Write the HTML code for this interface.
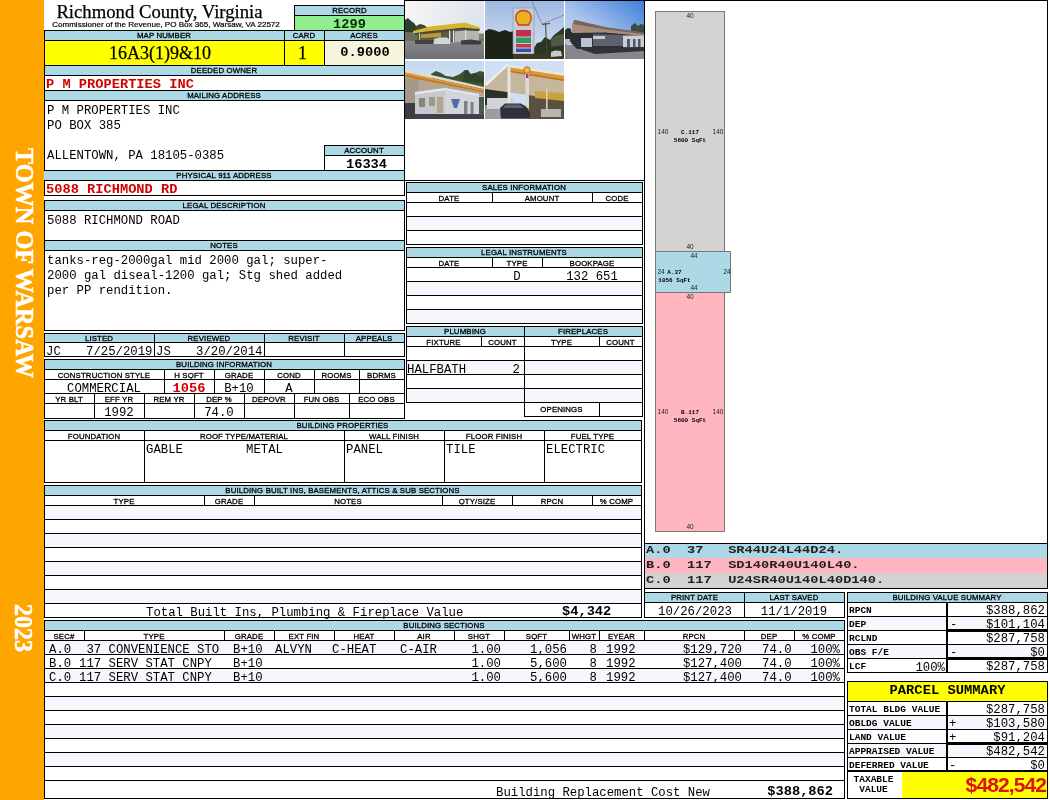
<!DOCTYPE html>
<html lang="en"><head><meta charset="utf-8"><title>Richmond County, Virginia - Property Record Card</title>
<style>
html,body{margin:0;padding:0;background:#fff;}
body{width:1050px;height:800px;position:relative;overflow:hidden;}
#p{position:absolute;left:0;top:0;width:1050px;height:800px;overflow:hidden;will-change:transform;}
#p div{position:absolute;box-sizing:border-box;}
.t{white-space:pre;line-height:1;color:#000;}
.lb{font-family:'Liberation Sans',sans-serif;font-size:7.8px;letter-spacing:0.15px;line-height:9px;height:9px;-webkit-text-stroke:0.3px #000;}
.m{font-family:'Liberation Mono',monospace;font-size:12.3px;line-height:14px;height:14px;}
.mb{font-family:'Liberation Mono',monospace;font-size:12.3px;line-height:14px;height:14px;font-weight:bold;}
.red{color:#d40000;}
.mB{font-family:'Liberation Mono',monospace;font-size:13.7px;line-height:14px;height:14px;font-weight:bold;transform:scaleY(.89);transform-origin:50% 76%;}
#p .lg{transform:scaleY(.85);}
.sk{font-family:'Liberation Sans',sans-serif;font-size:6.5px;line-height:8px;height:8px;color:#222;}
.skb{font-family:'Liberation Mono',monospace;font-size:6px;line-height:8px;height:8px;font-weight:bold;}
.sm{font-family:'Liberation Mono',monospace;font-size:9.5px;font-weight:bold;line-height:10px;}
</style></head>
<body><div id="p">
<div style="left:0px;top:0px;width:44px;height:800px;background:#ffa500;"></div>
<div class="t" style="left:23.5px;top:262.5px;width:0;height:0;"><div class="t" style="left:-150px;top:-15px;width:300px;height:30px;line-height:30px;text-align:center;transform:rotate(90deg) scaleX(0.97);font-family:'Liberation Serif',serif;font-weight:bold;font-size:25px;color:#fff;-webkit-text-stroke:0.5px #fff;">TOWN OF WARSAW</div></div>
<div class="t" style="left:23px;top:628px;width:0;height:0;"><div class="t" style="left:-50px;top:-15px;width:100px;height:30px;line-height:30px;text-align:center;transform:rotate(90deg) scaleX(0.96);font-family:'Liberation Serif',serif;font-weight:bold;font-size:25px;color:#fff;-webkit-text-stroke:0.5px #fff;">2023</div></div>
<div class="t " style="left:44px;top:2px;width:232px;text-align:center;left:43.5px;font-family:'Liberation Serif',serif;font-size:18.7px;-webkit-text-stroke:0.25px #000;line-height:20px;height:20px;">Richmond County, Virginia</div>
<div class="t " style="left:44px;top:20px;width:244px;text-align:center;font-family:'Liberation Sans',sans-serif;font-size:8.05px;-webkit-text-stroke:0.2px #000;line-height:10px;height:10px;">Commissioner of the Revenue, PO Box 365, Warsaw, VA 22572</div>
<div style="left:294px;top:5px;width:111px;height:26px;background:#90ee90;"></div>
<div style="left:294px;top:5px;width:111px;height:10px;background:#add8e6;"></div>
<div style="left:294px;top:5px;width:111px;height:1px;background:#000;"></div>
<div style="left:294px;top:30px;width:111px;height:1px;background:#000;"></div>
<div style="left:294px;top:5px;width:1px;height:26px;background:#000;"></div>
<div style="left:404px;top:5px;width:1px;height:26px;background:#000;"></div>
<div style="left:294px;top:15px;width:111px;height:1px;background:#000;"></div>
<div class="t lb" style="left:294px;top:6px;width:111px;text-align:center;">RECORD</div>
<div class="t mB" style="left:294px;top:18px;width:111px;text-align:center;color:#0a2a0a;">1299</div>
<div style="left:44px;top:30px;width:361px;height:11px;background:#add8e6;"></div>
<div style="left:44px;top:41px;width:281px;height:25px;background:#ffff00;"></div>
<div style="left:325px;top:41px;width:80px;height:25px;background:#f5f5dc;"></div>
<div style="left:44px;top:30px;width:361px;height:1px;background:#000;"></div>
<div style="left:44px;top:65px;width:361px;height:1px;background:#000;"></div>
<div style="left:44px;top:30px;width:1px;height:36px;background:#000;"></div>
<div style="left:404px;top:30px;width:1px;height:36px;background:#000;"></div>
<div style="left:44px;top:40px;width:361px;height:1px;background:#000;"></div>
<div style="left:284px;top:30px;width:1px;height:36px;background:#000;"></div>
<div style="left:324px;top:30px;width:1px;height:36px;background:#000;"></div>
<div class="t lb" style="left:44px;top:31px;width:240px;text-align:center;">MAP NUMBER</div>
<div class="t lb" style="left:284px;top:31px;width:40px;text-align:center;">CARD</div>
<div class="t lb" style="left:324px;top:31px;width:80px;text-align:center;">ACRES</div>
<div class="t " style="left:40px;top:42px;width:240px;text-align:center;font-family:'Liberation Serif',serif;font-size:18px;-webkit-text-stroke:0.25px #000;line-height:22px;height:22px;">16A3(1)9&amp;10</div>
<div class="t " style="left:283px;top:42px;width:39px;text-align:center;font-family:'Liberation Serif',serif;font-size:18px;-webkit-text-stroke:0.25px #000;line-height:22px;height:22px;">1</div>
<div class="t mB" style="left:325px;top:46px;width:80px;text-align:center;">0.9000</div>
<div style="left:44px;top:66px;width:361px;height:9px;background:#add8e6;"></div>
<div style="left:44px;top:75px;width:361px;height:1px;background:#000;"></div>
<div style="left:44px;top:90px;width:361px;height:1px;background:#000;"></div>
<div style="left:44px;top:91px;width:361px;height:9px;background:#add8e6;"></div>
<div style="left:44px;top:100px;width:361px;height:1px;background:#000;"></div>
<div style="left:44px;top:65px;width:1px;height:131px;background:#000;"></div>
<div style="left:404px;top:65px;width:1px;height:131px;background:#000;"></div>
<div class="t lb" style="left:44px;top:66px;width:360px;text-align:center;">DEEDED OWNER</div>
<div class="t lb" style="left:44px;top:91px;width:360px;text-align:center;">MAILING ADDRESS</div>
<div class="t mB red" style="left:46px;top:78px;width:350px;text-align:left;">P M PROPERTIES INC</div>
<div class="t m" style="left:47px;top:104px;width:400px;text-align:left;">P M PROPERTIES INC</div>
<div class="t m" style="left:47px;top:119px;width:400px;text-align:left;">PO BOX 385</div>
<div class="t m" style="left:47px;top:149px;width:400px;text-align:left;">ALLENTOWN, PA 18105-0385</div>
<div style="left:324px;top:145px;width:81px;height:10px;background:#add8e6;"></div>
<div style="left:324px;top:145px;width:81px;height:1px;background:#000;"></div>
<div style="left:324px;top:170px;width:81px;height:1px;background:#000;"></div>
<div style="left:324px;top:145px;width:1px;height:26px;background:#000;"></div>
<div style="left:404px;top:145px;width:1px;height:26px;background:#000;"></div>
<div style="left:324px;top:155px;width:81px;height:1px;background:#000;"></div>
<div class="t lb" style="left:324px;top:146px;width:80px;text-align:center;">ACCOUNT</div>
<div class="t mB" style="left:326px;top:158px;width:81px;text-align:center;">16334</div>
<div style="left:44px;top:170px;width:361px;height:10px;background:#add8e6;"></div>
<div style="left:44px;top:170px;width:361px;height:1px;background:#000;"></div>
<div style="left:44px;top:180px;width:361px;height:1px;background:#000;"></div>
<div style="left:44px;top:195px;width:361px;height:1px;background:#000;"></div>
<div class="t lb" style="left:44px;top:171px;width:360px;text-align:center;">PHYSICAL 911 ADDRESS</div>
<div class="t mB red" style="left:46px;top:183px;width:350px;text-align:left;">5088 RICHMOND RD</div>
<div style="left:44px;top:200px;width:361px;height:10px;background:#add8e6;"></div>
<div style="left:44px;top:240px;width:361px;height:10px;background:#add8e6;"></div>
<div style="left:44px;top:200px;width:361px;height:1px;background:#000;"></div>
<div style="left:44px;top:330px;width:361px;height:1px;background:#000;"></div>
<div style="left:44px;top:200px;width:1px;height:131px;background:#000;"></div>
<div style="left:404px;top:200px;width:1px;height:131px;background:#000;"></div>
<div style="left:44px;top:210px;width:361px;height:1px;background:#000;"></div>
<div style="left:44px;top:240px;width:361px;height:1px;background:#000;"></div>
<div style="left:44px;top:250px;width:361px;height:1px;background:#000;"></div>
<div class="t lb" style="left:44px;top:201px;width:360px;text-align:center;">LEGAL DESCRIPTION</div>
<div class="t lb" style="left:44px;top:241px;width:360px;text-align:center;">NOTES</div>
<div class="t m" style="left:47px;top:214px;width:400px;text-align:left;">5088 RICHMOND ROAD</div>
<div class="t m" style="left:47px;top:254px;width:400px;text-align:left;">tanks-reg-2000gal mid 2000 gal; super-</div>
<div class="t m" style="left:47px;top:269px;width:400px;text-align:left;">2000 gal diseal-1200 gal; Stg shed added</div>
<div class="t m" style="left:47px;top:284px;width:400px;text-align:left;">per PP rendition.</div>
<div style="left:44px;top:333px;width:361px;height:10px;background:#add8e6;"></div>
<div style="left:44px;top:333px;width:361px;height:1px;background:#000;"></div>
<div style="left:44px;top:356px;width:361px;height:1px;background:#000;"></div>
<div style="left:44px;top:333px;width:1px;height:24px;background:#000;"></div>
<div style="left:404px;top:333px;width:1px;height:24px;background:#000;"></div>
<div style="left:44px;top:342px;width:361px;height:1px;background:#000;"></div>
<div style="left:154px;top:333px;width:1px;height:24px;background:#000;"></div>
<div style="left:264px;top:333px;width:1px;height:24px;background:#000;"></div>
<div style="left:344px;top:333px;width:1px;height:24px;background:#000;"></div>
<div class="t lb" style="left:44px;top:334px;width:110px;text-align:center;">LISTED</div>
<div class="t lb" style="left:154px;top:334px;width:110px;text-align:center;">REVIEWED</div>
<div class="t lb" style="left:264px;top:334px;width:80px;text-align:center;">REVISIT</div>
<div class="t lb" style="left:344px;top:334px;width:60px;text-align:center;">APPEALS</div>
<div class="t m" style="left:46px;top:345px;width:400px;text-align:left;">JC</div>
<div class="t m" style="left:86px;top:345px;width:400px;text-align:left;">7/25/2019</div>
<div class="t m" style="left:156px;top:345px;width:400px;text-align:left;">JS</div>
<div class="t m" style="left:196px;top:345px;width:400px;text-align:left;">3/20/2014</div>
<div style="left:44px;top:359px;width:361px;height:10px;background:#add8e6;"></div>
<div style="left:44px;top:359px;width:361px;height:1px;background:#000;"></div>
<div style="left:44px;top:418px;width:361px;height:1px;background:#000;"></div>
<div style="left:44px;top:359px;width:1px;height:60px;background:#000;"></div>
<div style="left:404px;top:359px;width:1px;height:60px;background:#000;"></div>
<div style="left:44px;top:369px;width:361px;height:1px;background:#000;"></div>
<div style="left:44px;top:379px;width:361px;height:1px;background:#000;"></div>
<div style="left:44px;top:393px;width:361px;height:1px;background:#000;"></div>
<div style="left:44px;top:403px;width:361px;height:1px;background:#000;"></div>
<div class="t lb" style="left:44px;top:360px;width:360px;text-align:center;">BUILDING INFORMATION</div>
<div style="left:164px;top:369px;width:1px;height:25px;background:#000;"></div>
<div style="left:214px;top:369px;width:1px;height:25px;background:#000;"></div>
<div style="left:264px;top:369px;width:1px;height:25px;background:#000;"></div>
<div style="left:314px;top:369px;width:1px;height:25px;background:#000;"></div>
<div style="left:359px;top:369px;width:1px;height:25px;background:#000;"></div>
<div class="t lb" style="left:44px;top:370.5px;width:120px;text-align:center;">CONSTRUCTION STYLE</div>
<div class="t lb" style="left:164px;top:370.5px;width:50px;text-align:center;">H SQFT</div>
<div class="t lb" style="left:214px;top:370.5px;width:50px;text-align:center;">GRADE</div>
<div class="t lb" style="left:264px;top:370.5px;width:50px;text-align:center;">COND</div>
<div class="t lb" style="left:314px;top:370.5px;width:45px;text-align:center;">ROOMS</div>
<div class="t lb" style="left:359px;top:370.5px;width:45px;text-align:center;">BDRMS</div>
<div class="t m" style="left:44px;top:382px;width:120px;text-align:center;">COMMERCIAL</div>
<div class="t mB red" style="left:164px;top:382px;width:50px;text-align:center;">1056</div>
<div class="t m" style="left:214px;top:382px;width:50px;text-align:center;">B+10</div>
<div class="t m" style="left:264px;top:382px;width:50px;text-align:center;">A</div>
<div style="left:94px;top:393px;width:1px;height:26px;background:#000;"></div>
<div style="left:144px;top:393px;width:1px;height:26px;background:#000;"></div>
<div style="left:194px;top:393px;width:1px;height:26px;background:#000;"></div>
<div style="left:244px;top:393px;width:1px;height:26px;background:#000;"></div>
<div style="left:294px;top:393px;width:1px;height:26px;background:#000;"></div>
<div style="left:349px;top:393px;width:1px;height:26px;background:#000;"></div>
<div class="t lb" style="left:44px;top:394.5px;width:50px;text-align:center;">YR BLT</div>
<div class="t lb" style="left:94px;top:394.5px;width:50px;text-align:center;">EFF YR</div>
<div class="t lb" style="left:144px;top:394.5px;width:50px;text-align:center;">REM YR</div>
<div class="t lb" style="left:194px;top:394.5px;width:50px;text-align:center;">DEP %</div>
<div class="t lb" style="left:244px;top:394.5px;width:50px;text-align:center;">DEPOVR</div>
<div class="t lb" style="left:294px;top:394.5px;width:55px;text-align:center;">FUN OBS</div>
<div class="t lb" style="left:349px;top:394.5px;width:55px;text-align:center;">ECO OBS</div>
<div class="t m" style="left:94px;top:406px;width:50px;text-align:center;">1992</div>
<div class="t m" style="left:194px;top:406px;width:50px;text-align:center;">74.0</div>
<div style="left:44px;top:420px;width:598px;height:10px;background:#add8e6;"></div>
<div style="left:44px;top:420px;width:598px;height:1px;background:#000;"></div>
<div style="left:44px;top:482px;width:598px;height:1px;background:#000;"></div>
<div style="left:44px;top:420px;width:1px;height:63px;background:#000;"></div>
<div style="left:641px;top:420px;width:1px;height:63px;background:#000;"></div>
<div style="left:44px;top:430px;width:598px;height:1px;background:#000;"></div>
<div style="left:44px;top:440px;width:598px;height:1px;background:#000;"></div>
<div class="t lb" style="left:44px;top:421px;width:597px;text-align:center;">BUILDING PROPERTIES</div>
<div style="left:144px;top:430px;width:1px;height:53px;background:#000;"></div>
<div style="left:344px;top:430px;width:1px;height:53px;background:#000;"></div>
<div style="left:444px;top:430px;width:1px;height:53px;background:#000;"></div>
<div style="left:544px;top:430px;width:1px;height:53px;background:#000;"></div>
<div class="t lb" style="left:44px;top:431.5px;width:100px;text-align:center;">FOUNDATION</div>
<div class="t lb" style="left:144px;top:431.5px;width:200px;text-align:center;">ROOF TYPE/MATERIAL</div>
<div class="t lb" style="left:344px;top:431.5px;width:100px;text-align:center;">WALL FINISH</div>
<div class="t lb" style="left:444px;top:431.5px;width:100px;text-align:center;">FLOOR FINISH</div>
<div class="t lb" style="left:544px;top:431.5px;width:97px;text-align:center;">FUEL TYPE</div>
<div class="t m" style="left:146px;top:443px;width:400px;text-align:left;">GABLE</div>
<div class="t m" style="left:246px;top:443px;width:400px;text-align:left;">METAL</div>
<div class="t m" style="left:346px;top:443px;width:400px;text-align:left;">PANEL</div>
<div class="t m" style="left:446px;top:443px;width:400px;text-align:left;">TILE</div>
<div class="t m" style="left:546px;top:443px;width:400px;text-align:left;">ELECTRIC</div>
<div style="left:44px;top:485px;width:598px;height:10px;background:#add8e6;"></div>
<div style="left:44px;top:505px;width:598px;height:14px;background:#f6f6fd;"></div>
<div style="left:44px;top:533px;width:598px;height:14px;background:#f6f6fd;"></div>
<div style="left:44px;top:561px;width:598px;height:14px;background:#f6f6fd;"></div>
<div style="left:44px;top:589px;width:598px;height:14px;background:#f6f6fd;"></div>
<div style="left:44px;top:485px;width:598px;height:1px;background:#000;"></div>
<div style="left:44px;top:617px;width:598px;height:1px;background:#000;"></div>
<div style="left:44px;top:485px;width:1px;height:133px;background:#000;"></div>
<div style="left:641px;top:485px;width:1px;height:133px;background:#000;"></div>
<div style="left:44px;top:495px;width:598px;height:1px;background:#000;"></div>
<div style="left:44px;top:505px;width:598px;height:1px;background:#000;"></div>
<div style="left:44px;top:519px;width:598px;height:1px;background:#000;"></div>
<div style="left:44px;top:533px;width:598px;height:1px;background:#000;"></div>
<div style="left:44px;top:547px;width:598px;height:1px;background:#000;"></div>
<div style="left:44px;top:561px;width:598px;height:1px;background:#000;"></div>
<div style="left:44px;top:575px;width:598px;height:1px;background:#000;"></div>
<div style="left:44px;top:589px;width:598px;height:1px;background:#000;"></div>
<div style="left:44px;top:603px;width:598px;height:1px;background:#000;"></div>
<div class="t lb" style="left:44px;top:486px;width:597px;text-align:center;">BUILDING BUILT INS, BASEMENTS, ATTICS &amp; SUB SECTIONS</div>
<div style="left:204px;top:495px;width:1px;height:11px;background:#000;"></div>
<div style="left:254px;top:495px;width:1px;height:11px;background:#000;"></div>
<div style="left:442px;top:495px;width:1px;height:11px;background:#000;"></div>
<div style="left:512px;top:495px;width:1px;height:11px;background:#000;"></div>
<div style="left:592px;top:495px;width:1px;height:11px;background:#000;"></div>
<div class="t lb" style="left:44px;top:496.5px;width:160px;text-align:center;">TYPE</div>
<div class="t lb" style="left:204px;top:496.5px;width:50px;text-align:center;">GRADE</div>
<div class="t lb" style="left:254px;top:496.5px;width:188px;text-align:center;">NOTES</div>
<div class="t lb" style="left:442px;top:496.5px;width:70px;text-align:center;">QTY/SIZE</div>
<div class="t lb" style="left:512px;top:496.5px;width:80px;text-align:center;">RPCN</div>
<div class="t lb" style="left:592px;top:496.5px;width:49px;text-align:center;">% COMP</div>
<div class="t m" style="left:146px;top:606px;width:400px;text-align:left;">Total Built Ins, Plumbing &amp; Fireplace Value</div>
<div class="t mB" style="left:562px;top:605px;width:100px;text-align:left;">$4,342</div>
<div style="left:44px;top:620px;width:801px;height:10px;background:#add8e6;"></div>
<div style="left:44px;top:640px;width:801px;height:14px;background:#f6f6fd;"></div>
<div style="left:44px;top:668px;width:801px;height:14px;background:#f6f6fd;"></div>
<div style="left:44px;top:696px;width:801px;height:14px;background:#f6f6fd;"></div>
<div style="left:44px;top:724px;width:801px;height:14px;background:#f6f6fd;"></div>
<div style="left:44px;top:752px;width:801px;height:14px;background:#f6f6fd;"></div>
<div style="left:44px;top:620px;width:801px;height:1px;background:#000;"></div>
<div style="left:44px;top:798px;width:801px;height:1px;background:#000;"></div>
<div style="left:44px;top:620px;width:1px;height:179px;background:#000;"></div>
<div style="left:844px;top:620px;width:1px;height:179px;background:#000;"></div>
<div style="left:44px;top:630px;width:801px;height:1px;background:#000;"></div>
<div style="left:44px;top:640px;width:801px;height:1px;background:#000;"></div>
<div style="left:44px;top:654px;width:801px;height:1px;background:#000;"></div>
<div style="left:44px;top:668px;width:801px;height:1px;background:#000;"></div>
<div style="left:44px;top:682px;width:801px;height:1px;background:#000;"></div>
<div style="left:44px;top:696px;width:801px;height:1px;background:#000;"></div>
<div style="left:44px;top:710px;width:801px;height:1px;background:#000;"></div>
<div style="left:44px;top:724px;width:801px;height:1px;background:#000;"></div>
<div style="left:44px;top:738px;width:801px;height:1px;background:#000;"></div>
<div style="left:44px;top:752px;width:801px;height:1px;background:#000;"></div>
<div style="left:44px;top:766px;width:801px;height:1px;background:#000;"></div>
<div style="left:44px;top:780px;width:801px;height:1px;background:#000;"></div>
<div class="t lb" style="left:44px;top:621px;width:800px;text-align:center;">BUILDING SECTIONS</div>
<div style="left:84px;top:630px;width:1px;height:11px;background:#000;"></div>
<div style="left:224px;top:630px;width:1px;height:11px;background:#000;"></div>
<div style="left:274px;top:630px;width:1px;height:11px;background:#000;"></div>
<div style="left:334px;top:630px;width:1px;height:11px;background:#000;"></div>
<div style="left:394px;top:630px;width:1px;height:11px;background:#000;"></div>
<div style="left:454px;top:630px;width:1px;height:11px;background:#000;"></div>
<div style="left:504px;top:630px;width:1px;height:11px;background:#000;"></div>
<div style="left:569px;top:630px;width:1px;height:11px;background:#000;"></div>
<div style="left:599px;top:630px;width:1px;height:11px;background:#000;"></div>
<div style="left:644px;top:630px;width:1px;height:11px;background:#000;"></div>
<div style="left:744px;top:630px;width:1px;height:11px;background:#000;"></div>
<div style="left:794px;top:630px;width:1px;height:11px;background:#000;"></div>
<div class="t lb" style="left:44px;top:631.5px;width:40px;text-align:center;">SEC#</div>
<div class="t lb" style="left:84px;top:631.5px;width:140px;text-align:center;">TYPE</div>
<div class="t lb" style="left:224px;top:631.5px;width:50px;text-align:center;">GRADE</div>
<div class="t lb" style="left:274px;top:631.5px;width:60px;text-align:center;">EXT FIN</div>
<div class="t lb" style="left:334px;top:631.5px;width:60px;text-align:center;">HEAT</div>
<div class="t lb" style="left:394px;top:631.5px;width:60px;text-align:center;">AIR</div>
<div class="t lb" style="left:454px;top:631.5px;width:50px;text-align:center;">SHGT</div>
<div class="t lb" style="left:504px;top:631.5px;width:65px;text-align:center;">SQFT</div>
<div class="t lb" style="left:569px;top:631.5px;width:30px;text-align:center;">WHGT</div>
<div class="t lb" style="left:599px;top:631.5px;width:45px;text-align:center;">EYEAR</div>
<div class="t lb" style="left:644px;top:631.5px;width:100px;text-align:center;">RPCN</div>
<div class="t lb" style="left:744px;top:631.5px;width:50px;text-align:center;">DEP</div>
<div class="t lb" style="left:794px;top:631.5px;width:50px;text-align:center;">% COMP</div>
<div class="t m" style="left:49px;top:643px;width:400px;text-align:left;">A.0</div>
<div class="t m" style="left:79px;top:643px;width:400px;text-align:left;"> 37 CONVENIENCE STO</div>
<div class="t m" style="left:233px;top:643px;width:400px;text-align:left;">B+10</div>
<div class="t m" style="left:275px;top:643px;width:400px;text-align:left;">ALVYN</div>
<div class="t m" style="left:332px;top:643px;width:400px;text-align:left;">C-HEAT</div>
<div class="t m" style="left:400px;top:643px;width:400px;text-align:left;">C-AIR</div>
<div class="t m" style="left:401px;top:643px;width:100px;text-align:right;">1.00</div>
<div class="t m" style="left:467px;top:643px;width:100px;text-align:right;">1,056</div>
<div class="t m" style="left:497px;top:643px;width:100px;text-align:right;">8</div>
<div class="t m" style="left:606px;top:643px;width:400px;text-align:left;">1992</div>
<div class="t m" style="left:642px;top:643px;width:100px;text-align:right;">$129,720</div>
<div class="t m" style="left:762px;top:643px;width:400px;text-align:left;">74.0</div>
<div class="t m" style="left:740px;top:643px;width:100px;text-align:right;">100%</div>
<div class="t m" style="left:49px;top:657px;width:400px;text-align:left;">B.0</div>
<div class="t m" style="left:79px;top:657px;width:400px;text-align:left;">117 SERV STAT CNPY</div>
<div class="t m" style="left:233px;top:657px;width:400px;text-align:left;">B+10</div>
<div class="t m" style="left:275px;top:657px;width:400px;text-align:left;"></div>
<div class="t m" style="left:332px;top:657px;width:400px;text-align:left;"></div>
<div class="t m" style="left:400px;top:657px;width:400px;text-align:left;"></div>
<div class="t m" style="left:401px;top:657px;width:100px;text-align:right;">1.00</div>
<div class="t m" style="left:467px;top:657px;width:100px;text-align:right;">5,600</div>
<div class="t m" style="left:497px;top:657px;width:100px;text-align:right;">8</div>
<div class="t m" style="left:606px;top:657px;width:400px;text-align:left;">1992</div>
<div class="t m" style="left:642px;top:657px;width:100px;text-align:right;">$127,400</div>
<div class="t m" style="left:762px;top:657px;width:400px;text-align:left;">74.0</div>
<div class="t m" style="left:740px;top:657px;width:100px;text-align:right;">100%</div>
<div class="t m" style="left:49px;top:671px;width:400px;text-align:left;">C.0</div>
<div class="t m" style="left:79px;top:671px;width:400px;text-align:left;">117 SERV STAT CNPY</div>
<div class="t m" style="left:233px;top:671px;width:400px;text-align:left;">B+10</div>
<div class="t m" style="left:275px;top:671px;width:400px;text-align:left;"></div>
<div class="t m" style="left:332px;top:671px;width:400px;text-align:left;"></div>
<div class="t m" style="left:400px;top:671px;width:400px;text-align:left;"></div>
<div class="t m" style="left:401px;top:671px;width:100px;text-align:right;">1.00</div>
<div class="t m" style="left:467px;top:671px;width:100px;text-align:right;">5,600</div>
<div class="t m" style="left:497px;top:671px;width:100px;text-align:right;">8</div>
<div class="t m" style="left:606px;top:671px;width:400px;text-align:left;">1992</div>
<div class="t m" style="left:642px;top:671px;width:100px;text-align:right;">$127,400</div>
<div class="t m" style="left:762px;top:671px;width:400px;text-align:left;">74.0</div>
<div class="t m" style="left:740px;top:671px;width:100px;text-align:right;">100%</div>
<div class="t m" style="left:496px;top:786px;width:400px;text-align:left;">Building Replacement Cost New</div>
<div class="t mB" style="left:733px;top:785px;width:100px;text-align:right;">$388,862</div>
<div style="left:404px;top:0px;width:241px;height:1px;background:#000;"></div>
<div style="left:404px;top:180px;width:241px;height:1px;background:#000;"></div>
<div style="left:404px;top:0px;width:1px;height:181px;background:#000;"></div>
<div style="left:644px;top:0px;width:1px;height:181px;background:#000;"></div>
<svg style="position:absolute;left:405px;top:1px;filter:blur(0.4px);" width="79" height="58" viewBox="0 0 79 58"><defs><linearGradient id="s1" x1="0" y1="0" x2="1" y2="0.3"><stop offset="0" stop-color="#f6f6f4"/><stop offset="1" stop-color="#dde4ee"/></linearGradient><linearGradient id="g1" x1="0" y1="0" x2="0" y2="1"><stop offset="0" stop-color="#84868a"/><stop offset="1" stop-color="#6e7076"/></linearGradient></defs><rect x="0" y="0" width="79" height="58" fill="url(#s1)" /><polygon points="0,19 3,17 6,20 9,22 11,25 11,36 0,36" fill="#2f3d2c" /><polygon points="11,25 15,23 19,24 23,27 26,30 11,34" fill="#3d4a36" /><polygon points="0,31 79,33 79,40 0,40" fill="#6a6e62" /><polygon points="62,33 79,32.5 79,38 62,38" fill="#80826f" /><rect x="0" y="40" width="79" height="18" fill="url(#g1)" /><polygon points="12,31 50,28 50,41 12,41" fill="#5d5a4c" /><polygon points="50,28 74,29 74,40 50,41" fill="#b4b6b4" /><polygon points="16,31 36,29 36,36 16,37" fill="#b89a38" /><polygon points="8,30 25,25.5 60,21.5 75,26.5 75,28 58,26.5 25,30 8,32.5" fill="#d6b62a" /><polygon points="9,32.5 25,30 58,26.5 75,28 74,30 58,29.5 25,32.5 10,34" fill="#4c4a34" /><rect x="44" y="29.5" width="1.3" height="12" fill="#e8e8e8" /><rect x="48" y="29.5" width="1.3" height="12" fill="#e8e8e8" /><rect x="60" y="29" width="1.2" height="11" fill="#dcdcdc" /><rect x="14" y="32" width="1" height="9" fill="#c8c8c0" /><polygon points="29,38 34,36.5 42,36.5 45,39 45,43 29,43" fill="#d4d6da" /><polygon points="10,39 28,39 28,43 10,43" fill="#40423e" /><polygon points="56,39.5 66,38.5 76,40 76,43.5 56,43.5" fill="#3a3c40" /></svg>
<svg style="position:absolute;left:485px;top:1px;filter:blur(0.4px);" width="79" height="58" viewBox="0 0 79 58"><defs><linearGradient id="s2" x1="0" y1="0" x2="0" y2="1"><stop offset="0" stop-color="#9fb9e2"/><stop offset="0.75" stop-color="#cddaf0"/><stop offset="1" stop-color="#d8e2f2"/></linearGradient></defs><rect x="0" y="0" width="79" height="58" fill="url(#s2)" /><polygon points="0,30 4,28 9,29 14,31 20,29 25,31 29,30 29,58 0,58" fill="#1b2417" /><polygon points="49,47 52,42 56,41 60,36 65,39 69,34 73,31 79,26 79,58 49,58" fill="#2c3626" /><polygon points="66,38 72,34 79,33 79,44 66,46" fill="#4a5a44" /><path d="M47,0 L57,23 M57,23 L79,14" stroke="#56606e" stroke-width="0.5" fill="none"/><path d="M60.5,22 L62,55 M57,23.5 L65,22.5" stroke="#4a4238" stroke-width="1" fill="none"/><rect x="28" y="7" width="21" height="46" fill="#c6cbd8" stroke="#8a90a0" stroke-width="0.6"/><path d="M31,19 C30,12 34,9.5 38.5,9.5 C43,9.5 47,12 46,19 L43.5,24 L33.5,24 Z" fill="#e9b024" stroke="#c63a22" stroke-width="1.3"/><rect x="31" y="29" width="15" height="6.5" fill="#c0304a" /><rect x="31" y="36.5" width="15" height="5.5" fill="#2f9a62" /><rect x="31" y="43" width="15" height="3.5" fill="#c43a4a" /><rect x="31" y="47.5" width="15" height="3.5" fill="#3452a0" /><rect x="28" y="53" width="51" height="5" fill="#3e3a22" /><polygon points="66,51 70,49.5 76,50 77,55 66,56" fill="#c9c9cb" /></svg>
<svg style="position:absolute;left:565px;top:1px;filter:blur(0.4px);" width="79" height="58" viewBox="0 0 79 58"><defs><linearGradient id="s3" x1="0" y1="1" x2="1" y2="0"><stop offset="0" stop-color="#d2def2"/><stop offset="0.45" stop-color="#a9c4ec"/><stop offset="1" stop-color="#3f7fda"/></linearGradient></defs><rect x="0" y="0" width="79" height="58" fill="url(#s3)" /><polygon points="0,29 3,27 6,28 7,40 0,44" fill="#27302a" /><polygon points="66,25 70,22 73,25 76,23 79,24 79,32 66,30" fill="#3a4a44" /><rect x="0" y="44" width="79" height="14" fill="#85878b" /><polygon points="6,31 40,31 79,34.5 79,48 12,48 6,42" fill="#2b2f35" /><polygon points="7,22 40,28.5 79,33 79,35 40,31.5 7,32" fill="#a88c7c" /><polygon points="8.5,19.5 10.5,19 40,26 79,31.5 79,33.2 40,28.5 8.5,23" fill="#78645a" /><polygon points="28,33 58,34 58,45 28,45" fill="#5e626c" /><rect x="58" y="34.5" width="21" height="12" fill="#c9ced6" /><rect x="62" y="38" width="3" height="8" fill="#50586a" /><rect x="68" y="38" width="2.5" height="8" fill="#50586a" /><rect x="73" y="38" width="2.5" height="8" fill="#50586a" /><polygon points="16,37 27,37 27,46 16,46" fill="#bcc2d2" /><rect x="0" y="38" width="5" height="5" fill="#b8bcc0" /><rect x="28" y="35" width="12" height="3" fill="#c8c8cc" /><polygon points="12,47 79,46 79,50 30,53" fill="#2f3338" /></svg>
<svg style="position:absolute;left:405px;top:61px;filter:blur(0.4px);" width="79" height="58" viewBox="0 0 79 58"><defs><linearGradient id="s4" x1="0" y1="0" x2="0" y2="1"><stop offset="0" stop-color="#c2d7f0"/><stop offset="0.5" stop-color="#dfe9f5"/></linearGradient></defs><rect x="0" y="0" width="79" height="58" fill="url(#s4)" /><polygon points="26,13 31,10 36,12 41,15 48,16 55,13 60,9 64,13 70,12 75,10 79,11 79,32 26,24" fill="#3c5232" /><polygon points="60,9 63,9 66,14 70,12 74,16 79,13 79,22 58,20" fill="#2f4428" /><polygon points="0,15 79,31 79,36 40,30 0,36" fill="#b3a692" /><rect x="0" y="18" width="14" height="30" fill="#a3988a" /><polygon points="0,8 79,26 79,28.3 0,11.3" fill="#dcdcd4" /><polygon points="0,11.3 79,28.3 79,31.5 0,15.5" fill="#da9a36" /><polygon points="0,13.5 79,30.3 79,31.5 0,15.5" fill="#c87428" /><polygon points="10,31 40,27 74,33 74,54 10,55" fill="#c5c9cd" /><polygon points="10,31 40,27 74,33 74,35 40,29.5 10,33.5" fill="#e4e6e8" /><polygon points="40,29.5 74,35 74,54 40,54" fill="#d2d6da" /><rect x="14" y="37" width="6" height="9" fill="#8a8478" /><rect x="24" y="36" width="6" height="9" fill="#a09a84" /><rect x="32" y="36" width="6" height="16" fill="#b0a890" /><polygon points="46,38 55,38 52,47 49,47" fill="#4f6eb2" /><rect x="59" y="40" width="3.5" height="13" fill="#7a828a" /><rect x="65.5" y="41" width="3" height="12" fill="#7a828a" /><rect x="0" y="53" width="79" height="5" fill="#3e4246" /><rect x="0" y="42" width="10" height="16" fill="#3a3e42" /><rect x="74" y="36" width="5" height="18" fill="#4a5a48" /></svg>
<svg style="position:absolute;left:485px;top:61px;filter:blur(0.4px);" width="79" height="58" viewBox="0 0 79 58"><defs></defs><rect x="0" y="0" width="79" height="58" fill="#cfdff4" /><polygon points="0,27 24,30 24,44 0,44" fill="#2b3129" /><rect x="0" y="44" width="79" height="14" fill="#8f9397" /><polygon points="44,33 79,35 79,58 44,58" fill="#5a5140" /><polygon points="0,24 22,4 79,13 79,37 50,35 0,28" fill="#c6b69e" /><polygon points="50,30 79,32 79,40 50,37" fill="#c9a240" /><polygon points="0,23 22,3 24.5,3.6 1.5,25" fill="#eeeeea" /><polygon points="24.5,3.6 79,12 79,15 24.5,6.5" fill="#e8e6de" /><polygon points="24.5,6.5 79,15 79,20 24.5,11" fill="#d99a34" /><polygon points="24.5,9.5 79,18.5 79,20 24.5,11" fill="#c66e28" /><rect x="2" y="37" width="27" height="11" fill="#d2d3d7" /><rect x="22.5" y="4" width="3" height="42" fill="#e6e4de" /><rect x="40.5" y="7" width="3.5" height="40" fill="#dcdad4" /><rect x="61" y="26" width="1.6" height="22" fill="#d8d0b0" /><circle cx="42" cy="9" r="3.2" fill="#e8c03a" stroke="#c8482a" stroke-width="0.8"/><rect x="41" y="13" width="2.5" height="4" fill="#a03a6a" /><polygon points="15,47 20,42.5 36,42.5 42,46.5 45,52 45,57.5 16,57.5" fill="#2f3138" /><polygon points="21,43.5 35,43.5 39,47 18,47" fill="#5a6270" /><rect x="56" y="48" width="20" height="8" fill="#b8b4b0" /><rect x="0" y="48" width="15" height="10" fill="#9a9ea2" /></svg>
<div style="left:406px;top:182px;width:237px;height:10px;background:#add8e6;"></div>
<div style="left:406px;top:216px;width:237px;height:14px;background:#f6f6fd;"></div>
<div style="left:406px;top:182px;width:237px;height:1px;background:#000;"></div>
<div style="left:406px;top:244px;width:237px;height:1px;background:#000;"></div>
<div style="left:406px;top:182px;width:1px;height:63px;background:#000;"></div>
<div style="left:642px;top:182px;width:1px;height:63px;background:#000;"></div>
<div style="left:406px;top:192px;width:237px;height:1px;background:#000;"></div>
<div style="left:406px;top:202px;width:237px;height:1px;background:#000;"></div>
<div style="left:406px;top:202px;width:237px;height:1px;background:#000;"></div>
<div style="left:406px;top:216px;width:237px;height:1px;background:#000;"></div>
<div style="left:406px;top:230px;width:237px;height:1px;background:#000;"></div>
<div class="t lb" style="left:406px;top:183px;width:236px;text-align:center;">SALES INFORMATION</div>
<div style="left:492px;top:192px;width:1px;height:11px;background:#000;"></div>
<div style="left:592px;top:192px;width:1px;height:11px;background:#000;"></div>
<div class="t lb" style="left:406px;top:193.5px;width:86px;text-align:center;">DATE</div>
<div class="t lb" style="left:492px;top:193.5px;width:100px;text-align:center;">AMOUNT</div>
<div class="t lb" style="left:592px;top:193.5px;width:50px;text-align:center;">CODE</div>
<div style="left:406px;top:247px;width:237px;height:10px;background:#add8e6;"></div>
<div style="left:406px;top:281px;width:237px;height:14px;background:#f6f6fd;"></div>
<div style="left:406px;top:309px;width:237px;height:14px;background:#f6f6fd;"></div>
<div style="left:406px;top:247px;width:237px;height:1px;background:#000;"></div>
<div style="left:406px;top:323px;width:237px;height:1px;background:#000;"></div>
<div style="left:406px;top:247px;width:1px;height:77px;background:#000;"></div>
<div style="left:642px;top:247px;width:1px;height:77px;background:#000;"></div>
<div style="left:406px;top:257px;width:237px;height:1px;background:#000;"></div>
<div style="left:406px;top:267px;width:237px;height:1px;background:#000;"></div>
<div style="left:406px;top:267px;width:237px;height:1px;background:#000;"></div>
<div style="left:406px;top:281px;width:237px;height:1px;background:#000;"></div>
<div style="left:406px;top:295px;width:237px;height:1px;background:#000;"></div>
<div style="left:406px;top:309px;width:237px;height:1px;background:#000;"></div>
<div class="t lb" style="left:406px;top:248px;width:236px;text-align:center;">LEGAL INSTRUMENTS</div>
<div style="left:492px;top:257px;width:1px;height:11px;background:#000;"></div>
<div style="left:542px;top:257px;width:1px;height:11px;background:#000;"></div>
<div class="t lb" style="left:406px;top:258.5px;width:86px;text-align:center;">DATE</div>
<div class="t lb" style="left:492px;top:258.5px;width:50px;text-align:center;">TYPE</div>
<div class="t lb" style="left:542px;top:258.5px;width:100px;text-align:center;">BOOKPAGE</div>
<div class="t m" style="left:492px;top:270px;width:50px;text-align:center;">D</div>
<div class="t m" style="left:542px;top:270px;width:100px;text-align:center;">132 651</div>
<div style="left:406px;top:326px;width:119px;height:10px;background:#add8e6;"></div>
<div style="left:406px;top:360px;width:119px;height:14px;background:#f6f6fd;"></div>
<div style="left:406px;top:388px;width:119px;height:14px;background:#f6f6fd;"></div>
<div style="left:406px;top:326px;width:119px;height:1px;background:#000;"></div>
<div style="left:406px;top:402px;width:119px;height:1px;background:#000;"></div>
<div style="left:406px;top:326px;width:1px;height:77px;background:#000;"></div>
<div style="left:524px;top:326px;width:1px;height:77px;background:#000;"></div>
<div style="left:406px;top:336px;width:119px;height:1px;background:#000;"></div>
<div style="left:406px;top:346px;width:119px;height:1px;background:#000;"></div>
<div style="left:406px;top:346px;width:119px;height:1px;background:#000;"></div>
<div style="left:406px;top:360px;width:119px;height:1px;background:#000;"></div>
<div style="left:406px;top:374px;width:119px;height:1px;background:#000;"></div>
<div style="left:406px;top:388px;width:119px;height:1px;background:#000;"></div>
<div class="t lb" style="left:406px;top:327px;width:118px;text-align:center;">PLUMBING</div>
<div style="left:481px;top:336px;width:1px;height:11px;background:#000;"></div>
<div class="t lb" style="left:406px;top:337.5px;width:75px;text-align:center;">FIXTURE</div>
<div class="t lb" style="left:481px;top:337.5px;width:43px;text-align:center;">COUNT</div>
<div style="left:524px;top:326px;width:119px;height:10px;background:#add8e6;"></div>
<div style="left:524px;top:360px;width:119px;height:14px;background:#f6f6fd;"></div>
<div style="left:524px;top:388px;width:119px;height:14px;background:#f6f6fd;"></div>
<div style="left:524px;top:326px;width:119px;height:1px;background:#000;"></div>
<div style="left:524px;top:402px;width:119px;height:1px;background:#000;"></div>
<div style="left:524px;top:326px;width:1px;height:77px;background:#000;"></div>
<div style="left:642px;top:326px;width:1px;height:77px;background:#000;"></div>
<div style="left:524px;top:336px;width:119px;height:1px;background:#000;"></div>
<div style="left:524px;top:346px;width:119px;height:1px;background:#000;"></div>
<div style="left:524px;top:346px;width:119px;height:1px;background:#000;"></div>
<div style="left:524px;top:360px;width:119px;height:1px;background:#000;"></div>
<div style="left:524px;top:374px;width:119px;height:1px;background:#000;"></div>
<div style="left:524px;top:388px;width:119px;height:1px;background:#000;"></div>
<div class="t lb" style="left:524px;top:327px;width:118px;text-align:center;">FIREPLACES</div>
<div style="left:599px;top:336px;width:1px;height:11px;background:#000;"></div>
<div class="t lb" style="left:524px;top:337.5px;width:75px;text-align:center;">TYPE</div>
<div class="t lb" style="left:599px;top:337.5px;width:43px;text-align:center;">COUNT</div>
<div style="left:524px;top:402px;width:119px;height:1px;background:#000;"></div>
<div style="left:524px;top:416px;width:119px;height:1px;background:#000;"></div>
<div style="left:524px;top:402px;width:1px;height:15px;background:#000;"></div>
<div style="left:642px;top:402px;width:1px;height:15px;background:#000;"></div>
<div style="left:599px;top:402px;width:1px;height:15px;background:#000;"></div>
<div class="t lb" style="left:524px;top:405px;width:75px;text-align:center;">OPENINGS</div>
<div class="t m" style="left:407px;top:363px;width:400px;text-align:left;">HALFBATH</div>
<div class="t m" style="left:420px;top:363px;width:100px;text-align:right;">2</div>
<div style="left:644px;top:0px;width:404px;height:1px;background:#000;"></div>
<div style="left:644px;top:543px;width:404px;height:1px;background:#000;"></div>
<div style="left:644px;top:0px;width:1px;height:544px;background:#000;"></div>
<div style="left:1047px;top:0px;width:1px;height:544px;background:#000;"></div>
<div style="left:655px;top:11px;width:70px;height:241px;background:#d3d3d3;border:1px solid #787878;"></div>
<div style="left:655px;top:292px;width:70px;height:240px;background:#ffb6c1;border:1px solid #787878;"></div>
<div style="left:655px;top:251px;width:76px;height:42px;background:#add8e6;border:1px solid #787878;"></div>
<div class="t sk" style="left:660px;top:12px;width:60px;text-align:center;">40</div>
<div class="t sk" style="left:633px;top:128px;width:60px;text-align:center;">140</div>
<div class="t sk" style="left:688px;top:128px;width:60px;text-align:center;">140</div>
<div class="t skb" style="left:660px;top:129px;width:60px;text-align:center;">C.117</div>
<div class="t skb" style="left:660px;top:137px;width:60px;text-align:center;">5600 SqFt</div>
<div class="t sk" style="left:660px;top:243px;width:60px;text-align:center;">40</div>
<div class="t sk" style="left:664px;top:252px;width:60px;text-align:center;">44</div>
<div class="t sk" style="left:631px;top:268px;width:60px;text-align:center;">24</div>
<div class="t sk" style="left:697px;top:268px;width:60px;text-align:center;">24</div>
<div class="t skb" style="left:644.5px;top:269px;width:60px;text-align:center;">A.37</div>
<div class="t skb" style="left:644.5px;top:277px;width:60px;text-align:center;">1056 SqFt</div>
<div class="t sk" style="left:664px;top:284px;width:60px;text-align:center;">44</div>
<div class="t sk" style="left:660px;top:293px;width:60px;text-align:center;">40</div>
<div class="t sk" style="left:633px;top:408px;width:60px;text-align:center;">140</div>
<div class="t sk" style="left:688px;top:408px;width:60px;text-align:center;">140</div>
<div class="t skb" style="left:660px;top:409px;width:60px;text-align:center;">B.117</div>
<div class="t skb" style="left:660px;top:417px;width:60px;text-align:center;">5600 SqFt</div>
<div class="t sk" style="left:660px;top:523px;width:60px;text-align:center;">40</div>
<div style="left:645px;top:544px;width:402px;height:14px;background:#add8e6;"></div>
<div style="left:645px;top:558px;width:402px;height:15px;background:#ffb6c1;"></div>
<div style="left:645px;top:573px;width:402px;height:15px;background:#d3d3d3;"></div>
<div style="left:644px;top:588px;width:404px;height:1px;background:#000;"></div>
<div style="left:644px;top:543px;width:1px;height:75px;background:#000;"></div>
<div style="left:1047px;top:543px;width:1px;height:46px;background:#000;"></div>
<div class="t mB lg" style="left:646px;top:543px;width:400px;text-align:left;color:#222;">A.0  37   SR44U24L44D24.</div>
<div class="t mB lg" style="left:646px;top:558px;width:400px;text-align:left;color:#222;">B.0  117  SD140R40U140L40.</div>
<div class="t mB lg" style="left:646px;top:573px;width:400px;text-align:left;color:#222;">C.0  117  U24SR40U140L40D140.</div>
<div style="left:644px;top:592px;width:201px;height:10px;background:#add8e6;"></div>
<div style="left:644px;top:592px;width:201px;height:1px;background:#000;"></div>
<div style="left:644px;top:617px;width:201px;height:1px;background:#000;"></div>
<div style="left:644px;top:592px;width:1px;height:26px;background:#000;"></div>
<div style="left:844px;top:592px;width:1px;height:26px;background:#000;"></div>
<div style="left:644px;top:602px;width:201px;height:1px;background:#000;"></div>
<div style="left:744px;top:592px;width:1px;height:26px;background:#000;"></div>
<div class="t lb" style="left:645px;top:593px;width:99px;text-align:center;">PRINT DATE</div>
<div class="t lb" style="left:744px;top:593px;width:100px;text-align:center;">LAST SAVED</div>
<div class="t m" style="left:645px;top:605px;width:100px;text-align:center;">10/26/2023</div>
<div class="t m" style="left:744px;top:605px;width:100px;text-align:center;">11/1/2019</div>
<div style="left:847px;top:592px;width:201px;height:10px;background:#add8e6;"></div>
<div style="left:847px;top:616px;width:201px;height:14px;background:#f6f6fd;"></div>
<div style="left:847px;top:644px;width:201px;height:14px;background:#f6f6fd;"></div>
<div style="left:847px;top:592px;width:201px;height:1px;background:#000;"></div>
<div style="left:847px;top:672px;width:201px;height:1px;background:#000;"></div>
<div style="left:847px;top:592px;width:1px;height:81px;background:#000;"></div>
<div style="left:1047px;top:592px;width:1px;height:81px;background:#000;"></div>
<div style="left:847px;top:602px;width:201px;height:1px;background:#000;"></div>
<div style="left:847px;top:616px;width:201px;height:1px;background:#000;"></div>
<div style="left:847px;top:630px;width:201px;height:1px;background:#000;"></div>
<div style="left:847px;top:644px;width:201px;height:1px;background:#000;"></div>
<div style="left:847px;top:658px;width:201px;height:1px;background:#000;"></div>
<div style="left:947px;top:629px;width:101px;height:3px;background:#000;"></div>
<div style="left:947px;top:657px;width:101px;height:3px;background:#000;"></div>
<div style="left:946px;top:602px;width:2px;height:71px;background:#000;"></div>
<div class="t lb" style="left:847px;top:593px;width:200px;text-align:center;">BUILDING VALUE SUMMARY</div>
<div class="t sm" style="left:849px;top:606px;width:100px;text-align:left;">RPCN</div>
<div class="t m" style="left:950px;top:604px;width:400px;text-align:left;"></div>
<div class="t m" style="left:945px;top:604px;width:100px;text-align:right;">$388,862</div>
<div class="t sm" style="left:849px;top:620px;width:100px;text-align:left;">DEP</div>
<div class="t m" style="left:950px;top:618px;width:400px;text-align:left;">-</div>
<div class="t m" style="left:945px;top:618px;width:100px;text-align:right;">$101,104</div>
<div class="t sm" style="left:849px;top:634px;width:100px;text-align:left;">RCLND</div>
<div class="t m" style="left:950px;top:632px;width:400px;text-align:left;"></div>
<div class="t m" style="left:945px;top:632px;width:100px;text-align:right;">$287,758</div>
<div class="t sm" style="left:849px;top:648px;width:100px;text-align:left;">OBS F/E</div>
<div class="t m" style="left:950px;top:646px;width:400px;text-align:left;">-</div>
<div class="t m" style="left:945px;top:646px;width:100px;text-align:right;">$0</div>
<div class="t sm" style="left:849px;top:662px;width:100px;text-align:left;">LCF</div>
<div class="t m" style="left:950px;top:660px;width:400px;text-align:left;"></div>
<div class="t m" style="left:945px;top:660px;width:100px;text-align:right;">$287,758</div>
<div class="t m" style="left:845px;top:661px;width:100px;text-align:right;">100%</div>
<div style="left:847px;top:681px;width:201px;height:20px;background:#ffff00;"></div>
<div style="left:847px;top:715px;width:201px;height:14px;background:#f6f6fd;"></div>
<div style="left:847px;top:743px;width:201px;height:14px;background:#f6f6fd;"></div>
<div style="left:902px;top:772px;width:146px;height:27px;background:#ffff00;"></div>
<div style="left:847px;top:681px;width:201px;height:1px;background:#000;"></div>
<div style="left:847px;top:798px;width:201px;height:1px;background:#000;"></div>
<div style="left:847px;top:681px;width:1px;height:118px;background:#000;"></div>
<div style="left:1047px;top:681px;width:1px;height:118px;background:#000;"></div>
<div style="left:847px;top:701px;width:201px;height:1px;background:#000;"></div>
<div style="left:847px;top:715px;width:201px;height:1px;background:#000;"></div>
<div style="left:847px;top:729px;width:201px;height:1px;background:#000;"></div>
<div style="left:847px;top:743px;width:201px;height:1px;background:#000;"></div>
<div style="left:847px;top:757px;width:201px;height:1px;background:#000;"></div>
<div style="left:847px;top:771px;width:201px;height:1px;background:#000;"></div>
<div style="left:947px;top:742px;width:101px;height:3px;background:#000;"></div>
<div style="left:847px;top:770px;width:201px;height:2px;background:#000;"></div>
<div style="left:946px;top:701px;width:2px;height:71px;background:#000;"></div>
<div class="t mB" style="left:847px;top:684px;width:201px;text-align:center;font-size:13.8px;">PARCEL SUMMARY</div>
<div class="t sm" style="left:849px;top:705px;width:100px;text-align:left;">TOTAL BLDG VALUE</div>
<div class="t m" style="left:949px;top:703px;width:400px;text-align:left;"></div>
<div class="t m" style="left:945px;top:703px;width:100px;text-align:right;">$287,758</div>
<div class="t sm" style="left:849px;top:719px;width:100px;text-align:left;">OBLDG VALUE</div>
<div class="t m" style="left:949px;top:717px;width:400px;text-align:left;">+</div>
<div class="t m" style="left:945px;top:717px;width:100px;text-align:right;">$103,580</div>
<div class="t sm" style="left:849px;top:733px;width:100px;text-align:left;">LAND VALUE</div>
<div class="t m" style="left:949px;top:731px;width:400px;text-align:left;">+</div>
<div class="t m" style="left:945px;top:731px;width:100px;text-align:right;">$91,204</div>
<div class="t sm" style="left:849px;top:747px;width:100px;text-align:left;">APPRAISED VALUE</div>
<div class="t m" style="left:949px;top:745px;width:400px;text-align:left;"></div>
<div class="t m" style="left:945px;top:745px;width:100px;text-align:right;">$482,542</div>
<div class="t sm" style="left:849px;top:761px;width:100px;text-align:left;">DEFERRED VALUE</div>
<div class="t m" style="left:949px;top:759px;width:400px;text-align:left;">-</div>
<div class="t m" style="left:945px;top:759px;width:100px;text-align:right;">$0</div>
<div class="t sm" style="left:846.5px;top:775px;width:54px;text-align:center;">TAXABLE</div>
<div class="t sm" style="left:846.5px;top:785px;width:54px;text-align:center;">VALUE</div>
<div class="t " style="left:902px;top:773px;width:144px;text-align:right;font-family:'Liberation Sans',sans-serif;font-weight:bold;font-size:21px;line-height:24px;height:24px;color:#e01010;letter-spacing:-0.9px;">$482,542</div>
</div></body></html>
